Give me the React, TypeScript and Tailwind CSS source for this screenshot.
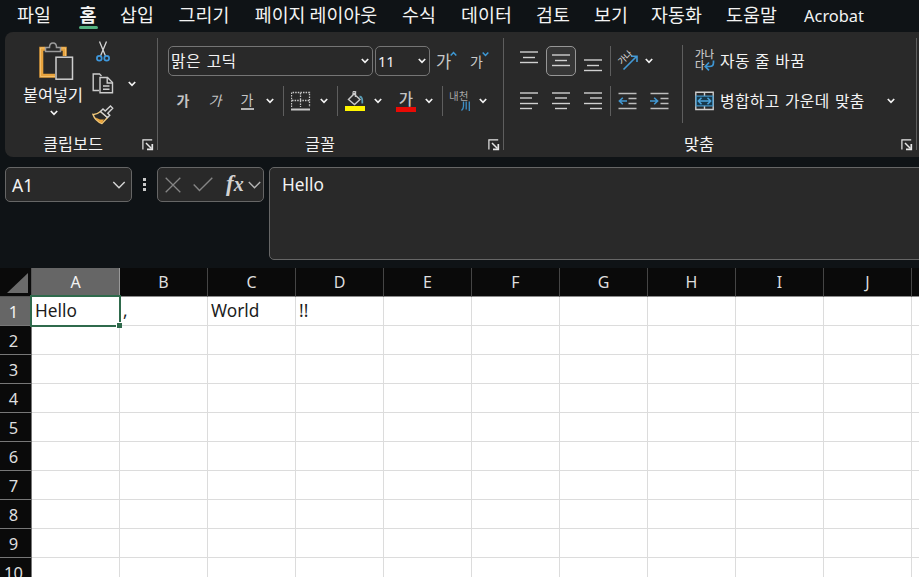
import type { ReactNode } from "react";

const KR = "font-['Noto_Sans','Noto_Sans_CJK_KR',sans-serif]";
const HANGUL = "font-['Noto_Sans_CJK_KR',sans-serif]";

const tabs = [
  { label: "파일", width: "w-[34px]", gap: "ml-[17px]" },
  { label: "홈", width: "w-[18px]", gap: "ml-[28px]", active: true },
  { label: "삽입", width: "w-[34px]", gap: "ml-[23px]" },
  { label: "그리기", width: "w-[52px]", gap: "ml-[24px]" },
  { label: "페이지 레이아웃", width: "w-[126px]", gap: "ml-[23px]" },
  { label: "수식", width: "w-[34px]", gap: "ml-[23px]" },
  { label: "데이터", width: "w-[51px]", gap: "ml-[25px]" },
  { label: "검토", width: "w-[34px]", gap: "ml-[24px]" },
  { label: "보기", width: "w-[34px]", gap: "ml-[24px]" },
  { label: "자동화", width: "w-[51px]", gap: "ml-[23px]" },
  { label: "도움말", width: "w-[51px]", gap: "ml-[24px]" },
  { label: "Acrobat", width: "w-[60px]", gap: "ml-[27px]", latin: true },
];

const columns = ["A", "B", "C", "D", "E", "F", "G", "H", "I", "J", ""];
const rows = [1, 2, 3, 4, 5, 6, 7, 8, 9, 10];
const values: Record<string, string> = { A1: "Hello", B1: ",", C1: "World", D1: "!!" };

function Chevron({ slot = "w-[20px]" }: { slot?: string }) {
  return (
    <span className={`flex shrink-0 items-center justify-center ${slot}`}>
      <svg width="8" height="6" viewBox="0 0 8 6" fill="none" stroke="#f2f2f2" strokeWidth="1.7">
        <path d="M0.8 1L4 4.3L7.2 1" />
      </svg>
    </span>
  );
}

function WideChevron({ size, color }: { size: number; color: string }) {
  return (
    <svg width={size} height="8" viewBox="0 0 13 8" fill="none" stroke={color} strokeWidth="1.4">
      <path d="M0.8 1L6.5 6.7L12.2 1" />
    </svg>
  );
}

function Divider({ height = "h-[30px]" }: { height?: string }) {
  return <span className={`w-px shrink-0 bg-[#5e5e5e] ${height}`} />;
}

function Launcher() {
  return (
    <svg className="mt-[2px]" width="12" height="12" viewBox="0 0 12 12" fill="none" stroke="#e6e6e6" strokeWidth="1.2">
      <path d="M0.9 10.5V0.9H10.2" />
      <path d="M4 4L9.5 9.5" strokeWidth="1.5" />
      <path d="M10.3 5V10.3H5" strokeWidth="1.7" />
    </svg>
  );
}

function Lines({ segments, slot = "w-[32px]" }: { segments: number[][]; slot?: string }) {
  return (
    <span className={`flex shrink-0 justify-center ${slot}`}>
      <svg width="18" height="20" viewBox="0 0 18 20" stroke="#d0d0d0" strokeWidth="1.4">
        {segments.map(([x1, x2, y]) => (
          <path key={y} d={`M${x1} ${y}H${x2}`} />
        ))}
      </svg>
    </span>
  );
}

function Indent({ right = false }: { right?: boolean }) {
  return (
    <span className="flex w-[32px] shrink-0 justify-center">
      <svg width="19" height="20" viewBox="0 0 19 20" fill="none" stroke="#bdbdbd" strokeWidth="1.5">
        <path d="M0.5 2.5H18.5M10.5 7.5H18.5M10.5 12.5H18.5M0.5 17.5H18.5" />
        <path
          d={right ? "M0 10H7.5M4.2 6.7L7.6 10L4.2 13.3" : "M9 10H1.5M4.8 6.7L1.4 10L4.8 13.3"}
          stroke="#4298d2"
          strokeWidth="1.6"
        />
      </svg>
    </span>
  );
}

function GroupLabel({ children, className }: { children: ReactNode; className: string }) {
  return (
    <div className={`flex h-[26px] items-center ${className}`}>
      <span className="-mt-[2px] w-[60px] text-center text-[16.3px] leading-none whitespace-nowrap">{children}</span>
      <Launcher />
    </div>
  );
}

function TabBar() {
  return (
    <nav className={`flex h-[32px] shrink-0 items-start ${HANGUL}`}>
      {tabs.map((t) => (
        <div key={t.label} className={`flex h-[29px] shrink-0 flex-col items-center justify-between ${t.width} ${t.gap}`}>
          <span
            className={
              t.latin
                ? "mt-[3px] font-['Noto_Sans',sans-serif] text-[16.4px] leading-[25px] whitespace-nowrap"
                : `mt-[2px] text-[18.4px] leading-[24px] whitespace-nowrap ${t.active ? "font-bold" : ""}`
            }
          >
            {t.label}
          </span>
          {t.active && <span className="h-[3px] w-[19px] shrink-0 rounded-full bg-[#53b17f]" />}
        </div>
      ))}
    </nav>
  );
}

function ClipboardGroup() {
  return (
    <section className="flex w-[152px] shrink-0 flex-col">
      <div className="flex h-[99px]">
        <div className="flex w-[82px] flex-col items-center pl-[14px] pt-[10px]">
          <svg className="ml-[5px] shrink-0" width="36" height="39" viewBox="0 0 36 39" fill="none">
            <path d="M7 6.7H3.3V33.8H17M23 6.7H26.7V14" stroke="#e8a33d" strokeWidth="4" />
            <path d="M7 6H2.5V34.5H17M23 6H27.5V14" stroke="#f6c878" strokeWidth="0.8" />
            <path d="M7.5 9.5V5.5H11.5C11.5 2.5 13 1 15 1S18.500 2.500 18.500 5.500H22.500V9.500Z" fill="#292929" stroke="#9b9b9b" strokeWidth="1.5" />
            <rect x="18" y="15.200" width="16.500" height="22" fill="#303030" stroke="#cecece" strokeWidth="1.5" />
          </svg>
          <span className="mt-[3px] text-[16.300px] leading-[20px] whitespace-nowrap">붙여넣기</span>
          <span className="mt-[6px] ml-[2px] flex w-[62px] justify-center"><Chevron slot="w-[8px]" /></span>
        </div>
        <div className="flex w-[32px] flex-col items-center pt-[9px]">
          <svg width="14" height="21" viewBox="0 0 14 21" fill="none" stroke="#d6d6d6" strokeWidth="1.300">
            <path d="M3.500 0.500L9.500 15M10.500 0.500L4.500 15" />
            <circle cx="3.300" cy="17.300" r="2.400" stroke="#3f98dc" strokeWidth="1.700" />
            <circle cx="10.700" cy="17.300" r="2.400" stroke="#3f98dc" strokeWidth="1.700" />
          </svg>
          <svg className="mt-[11px]" width="22" height="21" viewBox="0 0 22 21" fill="none" stroke="#cdcdcd" strokeWidth="1.400">
            <path d="M7 17.500H1.200V1H7.500L9.500 3" />
            <path d="M8 4.500H15.500L20.500 9.500V19.800H8Z" />
            <path d="M15.200 4.500V10H20.500M11 13H17.500M11 16.200H17.500" />
          </svg>
          <svg className="mt-[11px]" width="22" height="20" viewBox="0 0 22 20" fill="none">
            <path d="M1 9.500C4 10 6 8.500 8.500 6.500L15.500 12.500L10 18.500C6 17 2.500 14 1 9.500Z" stroke="#f0c779" strokeWidth="1.400" />
            <path d="M3.500 12.500L8 14.500L12 14.500L10 18C7.500 17 5 15.500 3.500 12.500Z" fill="#eca63b" />
            <path d="M8.500 6.500L11 4L13.200 6L18.500 1L20.700 3.200L15.800 8.200L17.800 10.200L15.500 12.500Z" fill="#292929" stroke="#d2d2d2" strokeWidth="1.400" />
          </svg>
        </div>
        <div className="flex h-[103px] w-[26px] items-center justify-center"><Chevron /></div>
      </div>
      <GroupLabel className="justify-between pl-[38px] pr-[3px]">클립보드</GroupLabel>
    </section>
  );
}

function FontGroup() {
  return (
    <section className="flex w-[345px] shrink-0 flex-col">
      <div className="flex h-[30px] items-center mt-[14px] pl-[10px]">
        <div className="flex h-[30px] w-[205px] items-center justify-between rounded-[5px] border border-[#757575] pl-[2px]">
          <span className="text-[15.800px] leading-none tracking-[0.350px] [word-spacing:2px]">맑은 고딕</span>
          <Chevron slot="w-[14px]" />
        </div>
        <div className="ml-[2px] flex h-[30px] w-[55px] items-center justify-between rounded-[5px] border border-[#757575] pl-[2px]">
          <span className="font-['Noto_Sans',sans-serif] text-[14.500px] leading-none">11</span>
          <Chevron slot="w-[14px]" />
        </div>
        <div className="ml-[6px] flex w-[34px] items-start text-[#c9c9c9]">
          <span className="text-[16.500px] leading-[20px]">가</span>
          <svg className="-ml-[1px]" width="7" height="6" viewBox="0 0 7 6" fill="none" stroke="#3d9ad7" strokeWidth="1.500"><path d="M0.700 4.500L3.500 1.500L6.300 4.500" /></svg>
        </div>
        <div className="flex w-[24px] items-start text-[#c9c9c9]">
          <span className="text-[14px] leading-[20px]">가</span>
          <svg className="-ml-[1px]" width="7" height="6" viewBox="0 0 7 6" fill="none" stroke="#3d9ad7" strokeWidth="1.500"><path d="M0.700 1.500L3.500 4.500L6.300 1.500" /></svg>
        </div>
      </div>
      <div className="mt-[10px] flex h-[30px] items-center pl-[9px] text-[#c4c4c4]">
        <span className="w-[32px] pb-[3px] text-center text-[14px] leading-none font-bold">가</span>
        <span className="w-[32px] pb-[3px] text-center text-[14px] leading-none italic">가</span>
        <span className="flex w-[32px] flex-col items-center">
          <span className="text-[14px] leading-[15px]">가</span>
          <span className="mt-px h-[1.500px] w-[13px] bg-[#b5b5b5]" />
        </span>
        <Chevron slot="w-[14px]" />
        <span className="w-[6px]" />
        <Divider />
        <span className="flex w-[33px] justify-start pl-[7px]">
          <svg width="20" height="20" viewBox="0 0 20 20" fill="none" stroke="#c8c8c8">
            <path d="M0.500 16V1.500H18.500V16M9.500 2V16M1 9.500H18" strokeWidth="1.300" strokeDasharray="1.500 1.100" />
            <path d="M0 18.500H19" strokeWidth="2" />
          </svg>
        </span>
        <Chevron slot="w-[14px]" />
        <span className="w-[6px]" />
        <Divider />
        <span className="flex w-[33px] pl-[7px]">
          <svg width="21" height="22" viewBox="0 0 21 22" fill="none">
            <path d="M8 3L15 9.500L9.500 14.500L3.500 9.500L10.500 2.500V7" stroke="#c8c8c8" strokeWidth="1.400" />
            <path d="M8 5V1.500H10.500V4" stroke="#c8c8c8" />
            <path d="M14.500 6.500C17 7 17.500 8.500 17.300 13.500" stroke="#599cb4" strokeWidth="1.800" />
            <path d="M0 16H20V21H0Z" fill="#fff500" />
          </svg>
        </span>
        <Chevron slot="w-[14px]" />
        <span className="ml-[11px] flex w-[20px] flex-col items-center">
          <span className="text-[15.500px] leading-[15px] font-medium">가</span>
          <span className="mt-[1px] h-[5px] w-[20px] bg-[#e90a05]" />
        </span>
        <Chevron slot="w-[26px]" />
        <Divider />
        <span className="flex w-[33px] flex-col pl-[6px]">
          <span className="mt-[-2px] text-[10.500px] leading-[11px] whitespace-nowrap text-[#a8a8a8]">내천</span>
          <svg className="ml-[12px]" width="10" height="10" viewBox="0 0 10 10" fill="none" stroke="#3d8fc7" strokeWidth="1.300">
            <path d="M2.500 0.500V5Q2.500 8 0.500 9.500M5.200 0.500V8.500M8.300 0.500V10" />
          </svg>
        </span>
        <Chevron slot="w-[14px]" />
      </div>
      <div className="h-[15px]" />
      <GroupLabel className="justify-between pl-[132px] pr-[3px]">글꼴</GroupLabel>
    </section>
  );
}

function AlignGroup() {
  return (
    <section className="flex w-[412px] shrink-0 flex-col">
      <div className="flex h-[99px] items-start pt-[13px]">
        <div className="w-[178px]">
          <div className="mt-px flex h-[30px] items-center pl-[9px]">
            <span className="-mt-[7px]"><Lines segments={[[0, 18, 4], [3, 15, 9.500], [0, 18, 14.500]]} /></span>
            <span className="ml-px flex h-[30px] w-[30px] items-center justify-center rounded-[5px] border border-[#969696] bg-[#363636]">
              <Lines slot="w-[20px]" segments={[[0, 18, 4], [3, 15, 9.500], [0, 18, 14.500]]} />
            </span>
            <span className="ml-px mt-[9px]"><Lines segments={[[0, 18, 4], [3, 15, 9.500], [0, 18, 14.500]]} /></span>
            <span className="w-px" />
            <Divider />
            <svg className="ml-[6px] shrink-0 overflow-visible" width="22" height="22" viewBox="0 0 22 22" fill="none">
              <text x="0" y="0" transform="translate(4.500 15) rotate(-43)" fontSize="8.500" fontWeight="500" fill="#d0d0d0">가나</text>
              <path d="M6.500 19.500L19.500 6.500M14 6.300H20V12" stroke="#4399d5" strokeWidth="1.600" />
            </svg>
            <Chevron slot="w-[19px]" />
          </div>
          <div className="mt-[10px] flex h-[30px] items-center pl-[9px]">
            <Lines segments={[[0, 18, 2], [0, 12, 7], [0, 18, 12.500], [0, 12, 17.500]]} />
            <Lines segments={[[0, 18, 2], [3, 15, 7], [0, 18, 12.500], [3, 15, 17.500]]} />
            <Lines segments={[[0, 18, 2], [6, 18, 7], [0, 18, 12.500], [6, 18, 17.500]]} />
            <span className="w-px" />
            <Divider />
            <Indent />
            <Indent right />
          </div>
        </div>
        <Divider height="h-[78px]" />
        <div className="w-[232px] pl-[11px]">
          <div className="mt-px flex h-[30px] items-center">
            <span className="flex w-[22px] shrink-0 flex-col pb-[2px] text-[10.300px] leading-[10.500px] font-medium text-[#c6c6c6]">
              <span className="pl-px">가나</span>
              <span className="flex pl-px">
                다
                <svg className="shrink-0" width="11" height="11" viewBox="0 0 11 11" fill="none">
                  <path d="M9.500 0.500V2.500Q9.500 6.500 5.500 6.500H1.500M5 2.500L1.200 6.500L5 10.300" stroke="#3e96d3" strokeWidth="1.700" />
                </svg>
              </span>
            </span>
            <span className="ml-[4px] text-[15.800px] leading-none tracking-[0.400px] whitespace-nowrap [word-spacing:1.300px]">자동 줄 바꿈</span>
          </div>
          <div className="mt-[10px] flex h-[30px] items-center">
            <svg className="shrink-0" width="21" height="20" viewBox="0 0 21 20" fill="none">
              <path d="M1.800 1.200H19.200V18.500H1.800Z M10.500 1V5M10.500 15V19" stroke="#cecece" strokeWidth="1.400" />
              <path d="M2.200 5.200H18.800V14.800H2.200Z" fill="#17384b" stroke="#4293c5" strokeWidth="1.300" />
              <path d="M4.500 10H16.500M7.500 6.800L4.300 10L7.500 13.200M13.500 6.800L16.700 10L13.500 13.200" stroke="#4da5dd" strokeWidth="1.500" />
            </svg>
            <span className="ml-[5px] w-[145px] text-[15.800px] leading-none tracking-[0.350px] whitespace-nowrap [word-spacing:1.500px]">병합하고 가운데 맞춤</span>
            <span className="w-[16px]" />
            <Chevron slot="w-[20px]" />
          </div>
        </div>
      </div>
      <GroupLabel className="justify-between pl-[165px] pr-[3px]">맞춤</GroupLabel>
    </section>
  );
}

function Ribbon() {
  return (
    <div className={`ml-[5px] flex h-[125px] w-[930px] shrink-0 rounded-[8px] bg-[#292929] ${HANGUL}`}>
      <ClipboardGroup />
      <span className="mt-[6px] block h-[112px] w-px shrink-0 bg-[#5e5e5e]" />
      <FontGroup />
      <span className="mt-[6px] block h-[112px] w-px shrink-0 bg-[#5e5e5e]" />
      <AlignGroup />
      <span className="mt-[6px] block h-[112px] w-px shrink-0 bg-[#5e5e5e]" />
    </div>
  );
}

function FormulaBar() {
  return (
    <div className="flex h-[111px] shrink-0 items-start pl-[5px] pt-[10px]">
      <div className="flex h-[35px] w-[127px] shrink-0 items-center justify-between rounded-[5px] border border-[#666] bg-[#292929] pl-[6px] pr-[5px]">
        <span className="mt-[2px] text-[17.500px] leading-none">A1</span>
        <WideChevron size={14} color="#d6d6d6" />
      </div>
      <div className="flex h-[35px] w-[25px] shrink-0 flex-col items-center justify-center gap-[2px]">
        <span className="size-[3px] bg-[#c9c9c9]" />
        <span className="size-[3px] bg-[#c9c9c9]" />
        <span className="size-[3px] bg-[#c9c9c9]" />
      </div>
      <div className="flex h-[35px] w-[107px] shrink-0 items-center rounded-[5px] border border-[#666] bg-[#292929] pl-[7px]">
        <svg width="16" height="16" viewBox="0 0 16 16" stroke="#858585" strokeWidth="1.300"><path d="M0.700 0.700L15.300 15.300M15.300 0.700L0.700 15.300" /></svg>
        <svg className="ml-[12px]" width="20" height="15" viewBox="0 0 20 15" fill="none" stroke="#858585" strokeWidth="1.400"><path d="M0.700 7.500L6.500 13.500L19.300 0.700" /></svg>
        <span className="ml-[13px] flex w-[19px] items-baseline pb-[3px] font-['Liberation_Serif',serif] leading-none italic text-[#d2d2d2]">
          <span className="text-[23px] font-bold">f</span>
          <span className="text-[20px] font-bold">x</span>
        </span>
        <span className="ml-[3px]"><WideChevron size={13} color="#b5b5b5" /></span>
      </div>
      <div className="ml-[5px] h-[93px] w-[670px] shrink-0 rounded-[5px] border border-[#666] bg-[#292929] pl-[12px] pt-[6px] text-[17.300px] leading-[21px]">
        Hello
      </div>
    </div>
  );
}

function Sheet() {
  return (
    <div className="relative w-[1000px] shrink-0">
      <div className="flex h-[29px]">
        <div className="flex w-[32px] shrink-0 items-end justify-end border-r border-b border-[#555] bg-[#0a0a0a] pr-[3px] pb-[3px]">
          <svg width="21" height="20" viewBox="0 0 21 20"><path d="M21 0V20H0Z" fill="#6b6b6b" /></svg>
        </div>
        {columns.map((c, i) => (
          <div
            key={i}
            className={`flex w-[88px] shrink-0 items-center justify-center border-r border-b border-b-[#8c8c8c] pb-px text-[16px] leading-none ${
              c === "A" ? "border-r-[#999] bg-[#666]" : "border-r-[#454545] bg-[#0a0a0a] text-[#dedede]"
            }`}
          >
            {c}
          </div>
        ))}
      </div>
      {rows.map((r) => (
        <div key={r} className="flex h-[29px]">
          <div
            className={`flex w-[32px] shrink-0 items-center justify-center border-r border-b border-[#777] pr-[4px] pt-[2px] text-[16.500px] leading-none ${
              r === 1 ? "bg-[#666]" : "bg-[#0a0a0a] text-[#dedede]"
            }`}
          >
            {r}
          </div>
          {columns.map((c, i) => (
            <div
              key={i}
              className="flex w-[88px] shrink-0 items-center border-r border-b border-[#dcdcdc] bg-white pl-[3px] text-[17.300px] leading-none text-[#1c1c1c]"
            >
              {values[c + r]}
            </div>
          ))}
        </div>
      ))}
      <div className="absolute top-[27px] left-[30px] h-[32px] w-[91px] border-2 border-[#2f6a4c]" />
      <div className="absolute top-[54px] left-[116px] size-[6px] border-t border-l border-white bg-[#2f6a4c]" />
    </div>
  );
}

export default function App() {
  return (
    <div className={`flex h-[577px] w-[919px] flex-col overflow-hidden bg-[#0f1316] text-[#f3f3f3] ${KR}`}>
      <TabBar />
      <Ribbon />
      <FormulaBar />
      <Sheet />
    </div>
  );
}
